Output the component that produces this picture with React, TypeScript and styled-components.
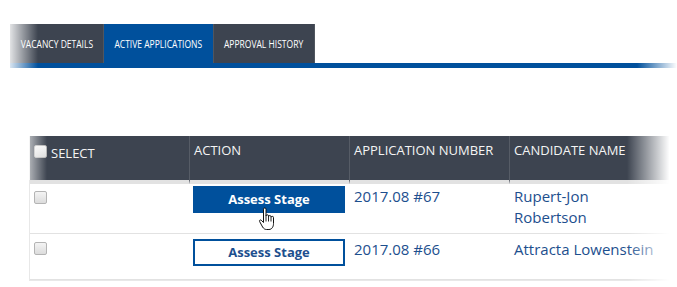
import React from 'react';
import styled, { createGlobalStyle } from 'styled-components';

const GlobalStyle = createGlobalStyle`
  body {
    margin: 0;
    background: #fff;
    font-family: 'Open Sans', 'Liberation Sans', sans-serif;
    overflow: hidden;
  }
`;

const Page = styled.div`
  width: 677px;
  height: 287px;
  padding-top: 24px;
  box-sizing: border-box;
  position: relative;
  overflow: hidden;
`;

const TabBar = styled.div`
  margin-left: 10px;
  display: flex;
  border-bottom: 5px solid #00509c;
  position: relative;

  &::before {
    content: '';
    position: absolute;
    left: 0;
    top: 0;
    bottom: -5px;
    width: 28px;
    background: linear-gradient(to right, rgba(255, 255, 255, 0.85), rgba(255, 255, 255, 0));
  }
`;

const Tab = styled.div<{ active?: boolean; w: number }>`
  width: ${p => p.w}px;
  height: 39px;
  box-sizing: border-box;
  display: flex;
  align-items: center;
  justify-content: center;
  background: ${p => (p.active ? '#00509c' : '#3d4450')};
  color: #fff;
  font-size: 11.5px;
  border-right: 1px solid #50565f;
  white-space: nowrap;
`;

const TabLabel = styled.span`
  display: inline-block;
  transform: scaleX(0.74);
`;

const Spacer = styled.div`
  height: 68px;
`;

const Table = styled.div`
  margin-left: 29px;
  width: 660px;
  border-left: 1px solid #e8e8e8;
  border-bottom: 1px solid #e8e8e8;
  display: grid;
  grid-template-columns: 160px 160px 160px 180px;
`;

const HeadCell = styled.div<{ first?: boolean }>`
  box-sizing: border-box;
  height: 48px;
  background: #3d4450;
  color: #f4f4f4;
  font-size: 13px;
  padding: ${p => (p.first ? '8px' : '5px')} 5px 0 4px;
  border-right: 1px solid #565c66;
  border-bottom: 4px solid #e2e2e2;
  display: flex;
  align-items: flex-start;
  gap: 4px;
`;

const Cell = styled.div<{ pad: number; h: number }>`
  box-sizing: border-box;
  height: ${p => p.h}px;
  padding: ${p => p.pad}px 5px 0 4px;
  border-bottom: 1px solid #e2e2e2;
  font-size: 15px;
  line-height: 21px;
  color: #1d4f8e;
`;

const NameText = styled.div`
  width: 146px;
  white-space: normal;
`;

const Check = styled.span<{ top?: number }>`
  display: inline-block;
  flex: none;
  width: 11px;
  height: 11px;
  border: 1px solid #b4b4b4;
  border-radius: 2px;
  background: linear-gradient(#f4f4f4, #dcdcdc);
  margin-top: ${p => p.top ?? 0}px;
`;

const StageButton = styled.div<{ filled?: boolean }>`
  width: 152px;
  height: 27px;
  margin-left: -1px;
  box-sizing: border-box;
  display: flex;
  align-items: center;
  justify-content: center;
  font-size: 13px;
  font-weight: 700;
  background: ${p => (p.filled ? '#00509c' : '#fff')};
  color: ${p => (p.filled ? '#fff' : '#1d4f8e')};
  border: 2px solid #00509c;
  position: relative;
`;

const Pointer = styled.svg`
  position: absolute;
  left: 63px;
  top: 19px;
`;

const FadeRight = styled.div`
  position: absolute;
  right: 0;
  top: 120px;
  width: 50px;
  height: 170px;
  background: linear-gradient(to right, rgba(255, 255, 255, 0), #fff 85%);
`;

const FadeLine = styled.div`
  position: absolute;
  right: 0;
  top: 60px;
  width: 40px;
  height: 10px;
  background: linear-gradient(to right, rgba(255, 255, 255, 0), #fff);
`;

const FadeLeft = styled.div`
  position: absolute;
  left: 29px;
  top: 136px;
  width: 18px;
  height: 44px;
  background: linear-gradient(to right, rgba(255, 255, 255, 0.6), rgba(255, 255, 255, 0));
`;

function Hand() {
  return (
    <Pointer width="17" height="24" viewBox="0 0 17 24">
      <path
        d="M5.5 2.2a1.25 1.25 0 0 1 2.5 0V9.5V9a1.25 1.25 0 0 1 2.5 0V9.8a1.25 1.25 0 0 1 2.5 0V10.6a1.25 1.25 0 0 1 2.5 0V16.5c0 3.2-1.6 6-4.6 6H8.6c-2 0-3-1-4-2.5L1.6 14.5c-.6-1 .6-2.1 1.6-1.3L5.5 15.5Z"
        fill="#fff"
        stroke="#111"
        strokeWidth="1"
        strokeLinejoin="round"
      />
      <path d="M8 10v4.5M10.5 10v4.5M13 11v3.5" stroke="#111" strokeWidth="0.9" />
    </Pointer>
  );
}

const rows = [
  { number: '2017.08 #67', name: 'Rupert-Jon Robertson', filled: true, pad: 2, h: 50, check: 5 },
  { number: '2017.08 #66', name: 'Attracta Lowenstein', filled: false, pad: 5, h: 46, check: 3 },
];

export default function App(): JSX.Element {
  return (
    <Page>
      <GlobalStyle />
      <TabBar>
        <Tab w={94}>
          <TabLabel>VACANCY DETAILS</TabLabel>
        </Tab>
        <Tab w={110} active>
          <TabLabel>ACTIVE APPLICATIONS</TabLabel>
        </Tab>
        <Tab w={101}>
          <TabLabel>APPROVAL HISTORY</TabLabel>
        </Tab>
      </TabBar>
      <Spacer />
      <Table>
        <HeadCell first>
          <Check top={1} />
          SELECT
        </HeadCell>
        <HeadCell>ACTION</HeadCell>
        <HeadCell>APPLICATION NUMBER</HeadCell>
        <HeadCell>CANDIDATE NAME</HeadCell>
        {rows.map(r => (
          <React.Fragment key={r.number}>
            <Cell pad={r.pad} h={r.h}>
              <Check top={r.check} />
            </Cell>
            <Cell pad={r.pad} h={r.h}>
              <StageButton filled={r.filled}>
                Assess Stage
                {r.filled && <Hand />}
              </StageButton>
            </Cell>
            <Cell pad={r.pad} h={r.h}>
              {r.number}
            </Cell>
            <Cell pad={r.pad} h={r.h}>
              <NameText>{r.name}</NameText>
            </Cell>
          </React.Fragment>
        ))}
      </Table>
      <FadeLeft />
      <FadeRight />
      <FadeLine />
    </Page>
  );
}
